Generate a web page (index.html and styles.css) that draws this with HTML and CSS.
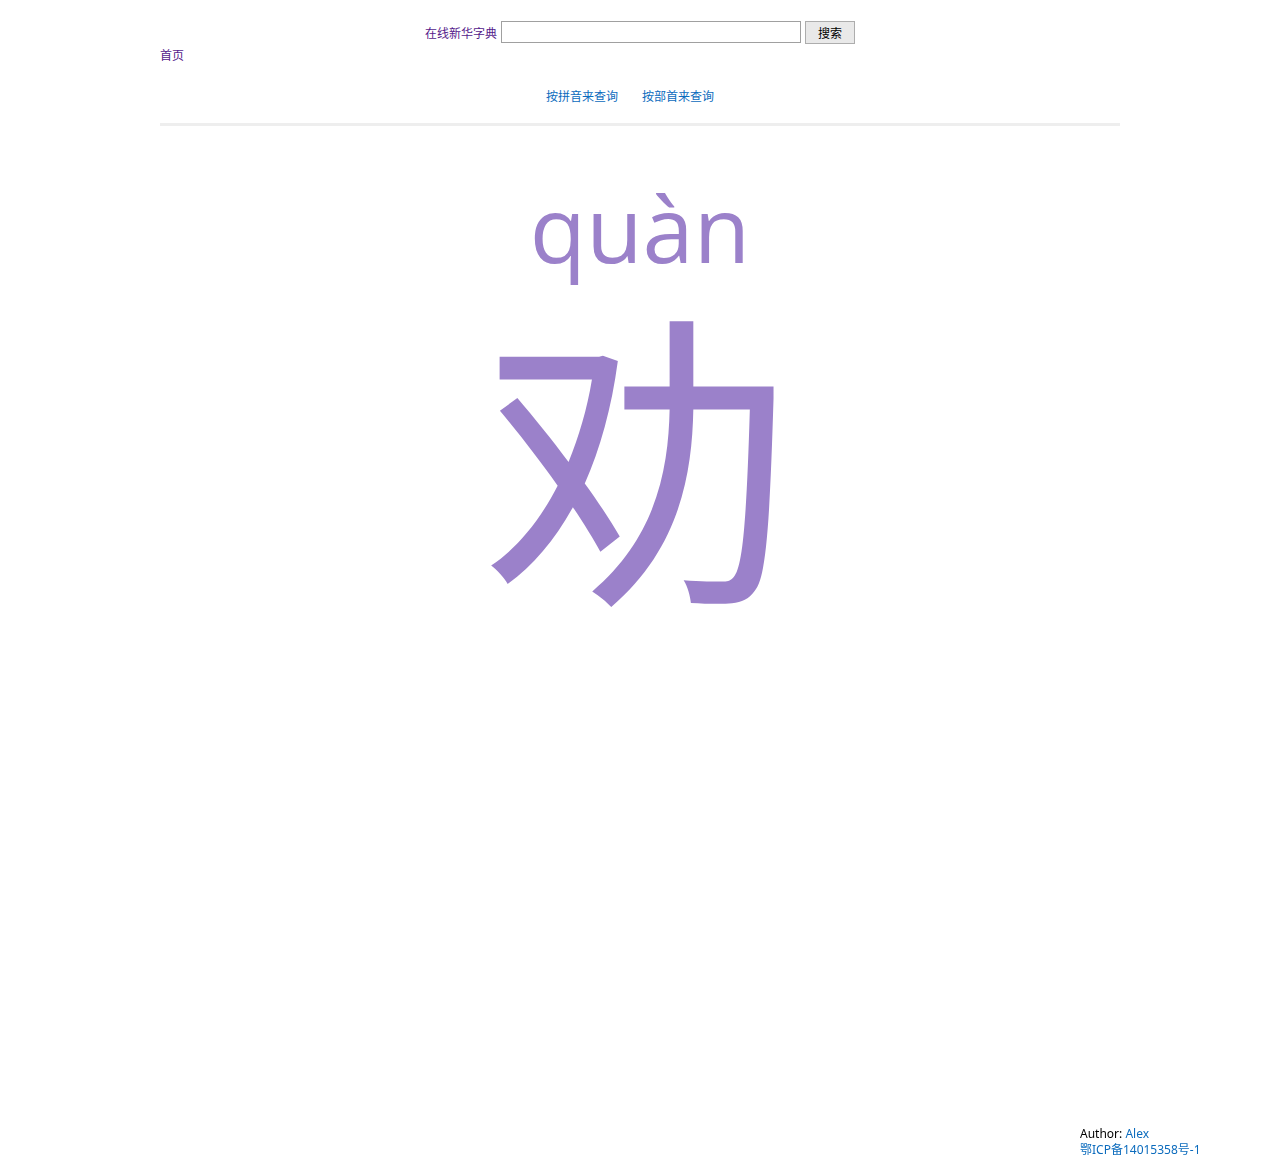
FILE: index.html
```html
<!DOCTYPE html>
<html lang="zh-CN">
<head>
<meta charset="utf-8">
<title>劝 - 在线新华字典</title>
<link rel="stylesheet" href="styles.css">
</head>
<body>
<div class="page">
  <form class="search">
    <a class="brand" href="#">在线新华字典</a>
    <input class="search-input" type="text">
    <button class="search-btn" type="button">搜索</button>
  </form>
  <div class="home"><a href="#">首页</a></div>
  <nav class="nav">
    <a href="#">按拼音来查询</a>
    <a href="#">按部首来查询</a>
  </nav>
  <div class="rule"></div>
  <main class="entry">
    <div class="pinyin">quàn</div>
    <div class="hanzi">劝</div>
  </main>
</div>
<footer class="footer">
  <div>Author: <a href="#">Alex</a></div>
  <div><a href="#">鄂ICP备14015358号-1</a></div>
</footer>
</body>
</html>
```
FILE: styles.css
```css
html, body {
  margin: 0;
  padding: 0;
  background: #fff;
}
body {
  font-family: "Noto Sans CJK SC", "Noto Sans", sans-serif;
  font-size: 12px;
  color: #000;
}
a {
  text-decoration: none;
}
.page {
  width: 960px;
  margin: 0 auto;
}
.search {
  display: flex;
  justify-content: center;
  align-items: center;
  height: 24px;
  margin: 0;
  padding-top: 20px;
  gap: 4px;
}
.brand {
  color: #551a8b;
  font-size: 12px;
}
.search-input {
  width: 300px;
  height: 22px;
  box-sizing: border-box;
  border: 1px solid #a0a0a0;
  margin: 0;
  padding: 0 2px;
}
.search-btn {
  width: 50px;
  height: 23px;
  box-sizing: border-box;
  border: 1px solid #adadad;
  background: #e9e9e9;
  font-family: "Noto Sans CJK SC", sans-serif;
  font-size: 12px;
  color: #000;
  padding: 0;
  margin: 0;
}
.home {
  height: 22px;
  line-height: 22px;
}
.home a {
  color: #551a8b;
}
.nav {
  display: flex;
  justify-content: center;
  gap: 24px;
  margin-top: 20px;
  padding-right: 20px;
  height: 20px;
  line-height: 20px;
}
.nav a {
  color: #0b6bbd;
}
.rule {
  margin-top: 17px;
  border-top: 3px solid #eeeeee;
}
.entry {
  text-align: center;
  color: #9b81ca;
}
.pinyin {
  font-family: "Open Sans", sans-serif;
  font-size: 92px;
  line-height: 120px;
  margin-top: 42px;
}
.hanzi {
  font-family: "Noto Sans CJK SC", sans-serif;
  font-size: 312px;
  line-height: 330px;
  margin-top: -6px;
}
.footer {
  position: fixed;
  right: 0;
  bottom: 9px;
  width: 200px;
  line-height: 16px;
  font-family: "Noto Sans", "Noto Sans CJK SC", sans-serif;
}
.footer a {
  color: #0b6bbd;
}
```
